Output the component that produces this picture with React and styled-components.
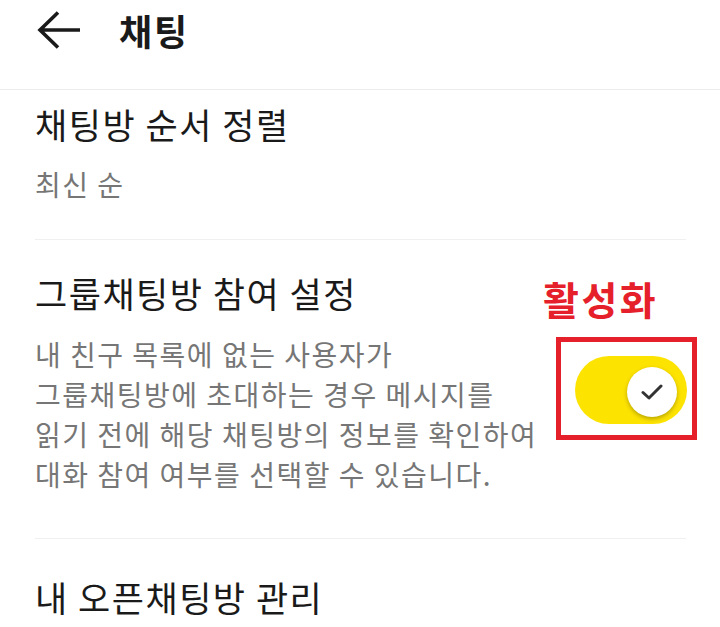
import React from "react";
import styled, { createGlobalStyle } from "styled-components";

const GlobalStyle = createGlobalStyle`
  html, body {
    margin: 0;
    padding: 0;
    background: #ffffff;
  }
  body {
    font-family: "Noto Sans CJK KR", "Noto Sans", sans-serif;
    color: #1a1a1a;
  }
  * { box-sizing: border-box; }
`;

const Page = styled.div`
  width: 720px;
  min-height: 627px;
  background: #ffffff;
  overflow: hidden;
`;

const Header = styled.header`
  height: 90px;
  display: flex;
  align-items: center;
  padding: 0 0 29px 37px;
  border-bottom: 1px solid #ececec;
`;

const BackButton = styled.button`
  width: 44px;
  height: 38px;
  padding: 0;
  border: 0;
  background: none;
  display: flex;
  color: #1a1a1a;
`;

const HeaderTitle = styled.h1`
  margin: 0 0 0 38px;
  font-size: 36px;
  line-height: 40px;
  font-weight: 700;
  letter-spacing: 2px;
  color: #1a1a1a;
`;

const Section = styled.section`
  display: flex;
  justify-content: space-between;
  align-items: flex-start;
  padding: ${(p) => p.$pad};
`;

const TextCol = styled.div`
  display: flex;
  flex-direction: column;
  gap: ${(p) => p.$gap || "0px"};
`;

const ItemTitle = styled.div`
  font-size: 35px;
  line-height: 44px;
  font-weight: 400;
  letter-spacing: 1.5px;
  color: #1a1a1a;
  white-space: nowrap;
`;

const ItemDesc = styled.div`
  font-size: 28px;
  line-height: 40px;
  letter-spacing: 1.5px;
  color: #767676;
  white-space: nowrap;
`;

const Divider = styled.hr`
  margin: 0 34px 0 35px;
  border: 0;
  height: 1px;
  background: #f0f0f0;
`;

const AnnotCol = styled.div`
  display: flex;
  flex-direction: column;
  align-items: flex-start;
  margin-top: 5px;
  gap: 17px;
`;

const AnnotLabel = styled.div`
  font-size: 39px;
  line-height: 44px;
  font-weight: 700;
  letter-spacing: 2.5px;
  color: #e5202a;
  white-space: nowrap;
`;

const HighlightBox = styled.div`
  margin-left: 13px;
  width: 141px;
  height: 103px;
  border: 5px solid #e5202a;
  padding: 14px 5px 11px 14px;
  display: flex;
`;

const Track = styled.div`
  width: 112px;
  height: 68px;
  border-radius: 34px;
  background: #fde300;
  display: flex;
  align-items: center;
  justify-content: ${(p) => (p.$on ? "flex-end" : "flex-start")};
  padding: 4px 10px 0 10px;
`;

const Knob = styled.div`
  width: 50px;
  height: 50px;
  border-radius: 50%;
  background: #ffffff;
  box-shadow: 0 2px 4px rgba(0, 0, 0, 0.28);
  display: flex;
  align-items: center;
  justify-content: center;
  color: #333333;
`;

const ArrowIcon = () => (
  <svg width="44" height="38" viewBox="0 0 44 38" fill="none">
    <path
      d="M43 19 H3 M21 1.5 L3 19 L21 36.5"
      stroke="currentColor"
      strokeWidth="3.6"
      strokeLinecap="butt"
      strokeLinejoin="miter"
    />
  </svg>
);

const CheckIcon = () => (
  <svg width="22" height="18" viewBox="0 0 22 18" fill="none">
    <path
      d="M2 9.5 L8 15 L20 3"
      stroke="currentColor"
      strokeWidth="3"
      strokeLinecap="round"
      strokeLinejoin="round"
    />
  </svg>
);

const Toggle = ({ on }) => (
  <Track $on={on}>
    <Knob>{on && <CheckIcon />}</Knob>
  </Track>
);

const descLines = [
  "내 친구 목록에 없는 사용자가",
  "그룹채팅방에 초대하는 경우 메시지를",
  "읽기 전에 해당 채팅방의 정보를 확인하여",
  "대화 참여 여부를 선택할 수 있습니다.",
];

export default function App() {
  return (
    <Page>
      <GlobalStyle />
      <Header>
        <BackButton aria-label="뒤로">
          <ArrowIcon />
        </BackButton>
        <HeaderTitle>채팅</HeaderTitle>
      </Header>

      <Section $pad="12px 34px 35px 35px">
        <TextCol $gap="18px">
          <ItemTitle>채팅방 순서 정렬</ItemTitle>
          <ItemDesc>최신 순</ItemDesc>
        </TextCol>
      </Section>
      <Divider />

      <Section $pad="31px 23px 44px 35px">
        <TextCol $gap="19px">
          <ItemTitle>그룹채팅방 참여 설정</ItemTitle>
          <div>
            {descLines.map((l) => (
              <ItemDesc key={l}>{l}</ItemDesc>
            ))}
          </div>
        </TextCol>
        <AnnotCol>
          <AnnotLabel>활성화</AnnotLabel>
          <HighlightBox>
            <Toggle on />
          </HighlightBox>
        </AnnotCol>
      </Section>
      <Divider />

      <Section $pad="36px 34px 0 35px">
        <ItemTitle>내 오픈채팅방 관리</ItemTitle>
      </Section>
    </Page>
  );
}
